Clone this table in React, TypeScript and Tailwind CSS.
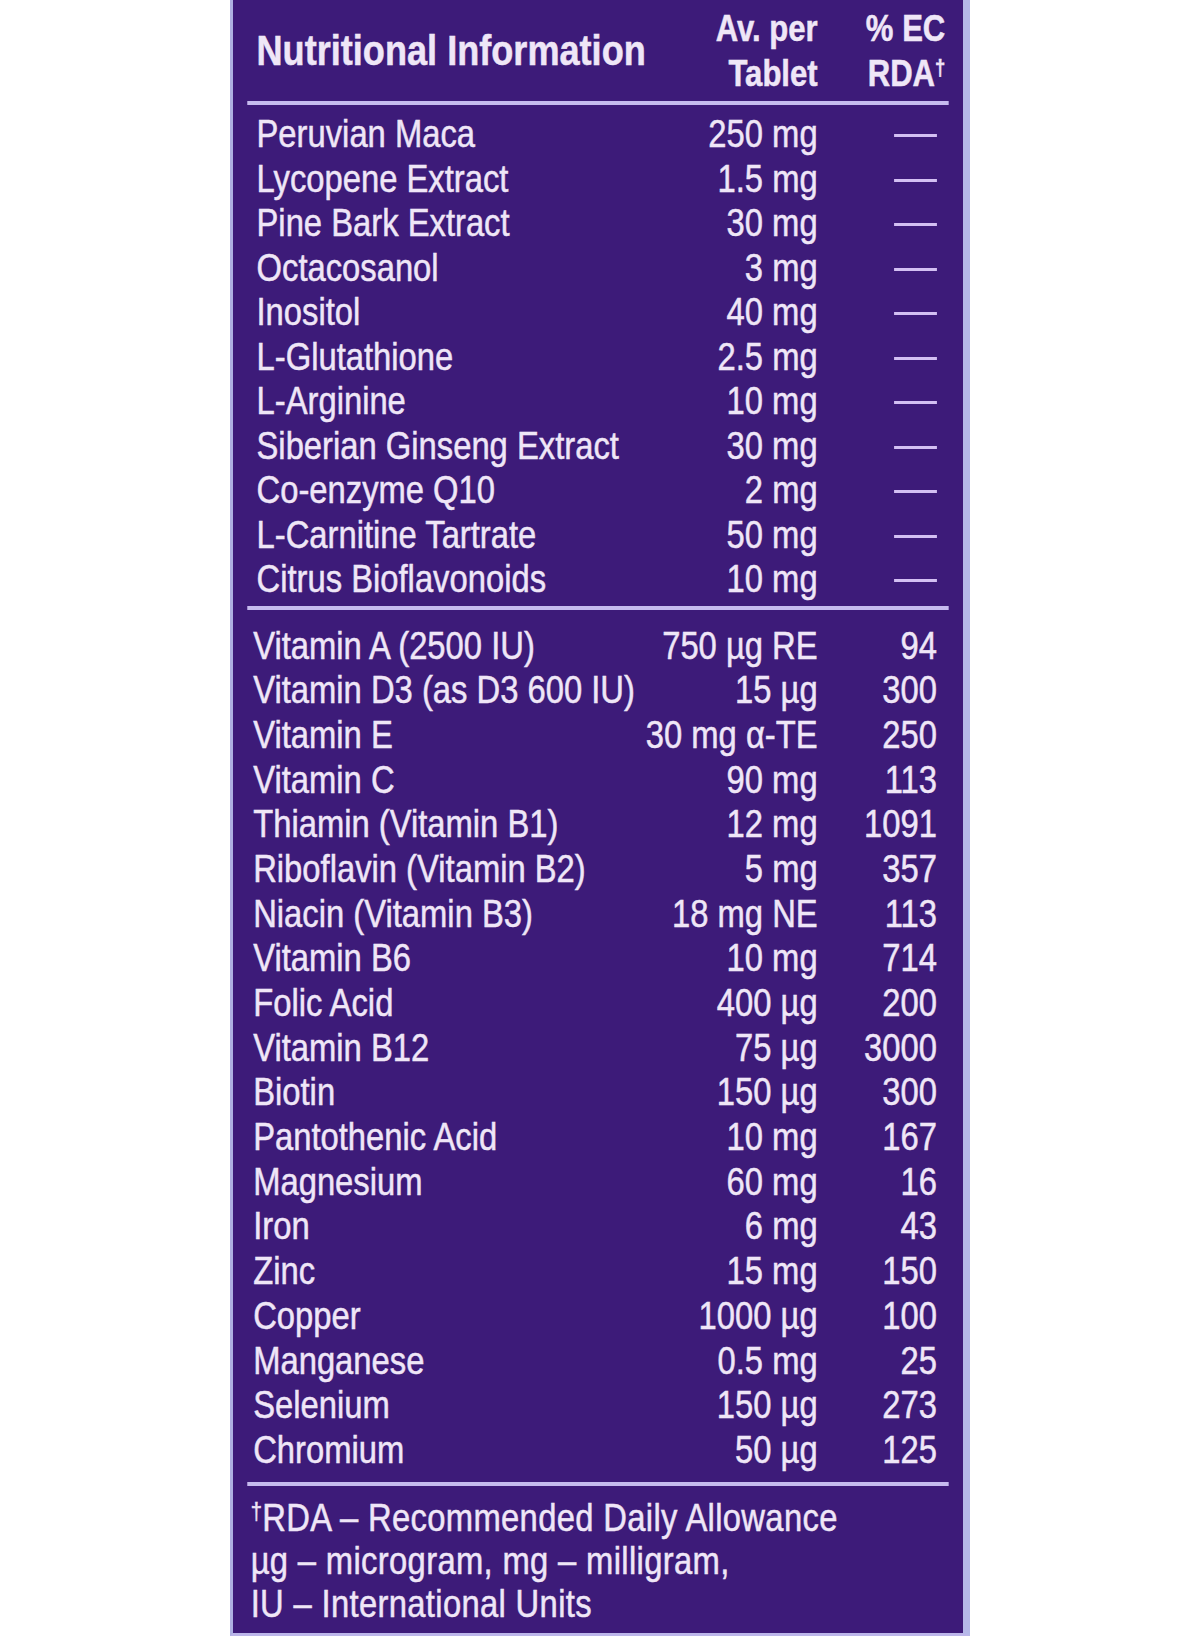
const botanicals: [string, string][] = [
  ['Peruvian Maca', '250 mg'],
  ['Lycopene Extract', '1.5 mg'],
  ['Pine Bark Extract', '30 mg'],
  ['Octacosanol', '3 mg'],
  ['Inositol', '40 mg'],
  ['L-Glutathione', '2.5 mg'],
  ['L-Arginine', '10 mg'],
  ['Siberian Ginseng Extract', '30 mg'],
  ['Co-enzyme Q10', '2 mg'],
  ['L-Carnitine Tartrate', '50 mg'],
  ['Citrus Bioflavonoids', '10 mg'],
];

const vitamins: [string, string, string][] = [
  ['Vitamin A (2500 IU)', '750 µg RE', '94'],
  ['Vitamin D3 (as D3 600 IU)', '15 µg', '300'],
  ['Vitamin E', '30 mg α-TE', '250'],
  ['Vitamin C', '90 mg', '113'],
  ['Thiamin (Vitamin B1)', '12 mg', '1091'],
  ['Riboflavin (Vitamin B2)', '5 mg', '357'],
  ['Niacin (Vitamin B3)', '18 mg NE', '113'],
  ['Vitamin B6', '10 mg', '714'],
  ['Folic Acid', '400 µg', '200'],
  ['Vitamin B12', '75 µg', '3000'],
  ['Biotin', '150 µg', '300'],
  ['Pantothenic Acid', '10 mg', '167'],
  ['Magnesium', '60 mg', '16'],
  ['Iron', '6 mg', '43'],
  ['Zinc', '15 mg', '150'],
  ['Copper', '1000 µg', '100'],
  ['Manganese', '0.5 mg', '25'],
  ['Selenium', '150 µg', '273'],
  ['Chromium', '50 µg', '125'],
];

const Rule = () => <div className="h-[4px] w-full shrink-0 bg-[#c6bbef]" />;

export default function App() {
  return (
    <div className="h-[1636px] w-[1200px] bg-white">
      <div className="ml-[230px] h-[1636px] w-[740px] overflow-hidden border-b-[3px] border-l-[3px] border-r-[7px] border-b-[#bcb6ea] border-l-[#aeb0e2] border-r-[#b5b9e8] bg-[#3d1b79] text-[#efe6f7]">
        {/* content is laid out wide, then squeezed to a condensed face */}
        <div className="flex w-[869px] origin-left scale-x-[0.84] flex-col px-[17px] font-['Liberation_Sans',Arial,sans-serif] [-webkit-text-stroke:0.5px_#efe6f7]">
          <div className="flex h-[101px] items-center pl-[11px] pr-[4px] font-bold">
            <div className="min-w-0 flex-1 whitespace-nowrap text-[43px]">Nutritional Information</div>
            <div className="w-[230px] shrink-0 text-right text-[37px] leading-[45px]">
              Av. per
              <br />
              Tablet
            </div>
            <div className="w-[152px] shrink-0 text-right text-[37px] leading-[45px]">
              % EC
              <br />
              RDA<sup className="text-[22px]">†</sup>
            </div>
          </div>
          <Rule />

          <div className="mb-[4px] mt-[7px] text-[39px]">
            {botanicals.map(([name, amount]) => (
              <div key={name} className="flex h-[44.5px] items-center pl-[11px] pr-[14px] leading-[44.5px]">
                <div className="min-w-0 flex-1 whitespace-nowrap">{name}</div>
                <div className="w-[230px] shrink-0 whitespace-nowrap text-right">{amount}</div>
                <div className="flex w-[142px] shrink-0 justify-end">
                  <div className="mt-[3px] h-[3px] w-[51px] bg-[#d3c0f3]" />
                </div>
              </div>
            ))}
          </div>
          <Rule />

          <div className="mb-[9px] mt-[14px] text-[39px]">
            {vitamins.map(([name, amount, rda]) => (
              <div key={name} className="flex h-[44.7px] items-center pl-[7px] pr-[14px] leading-[44.7px]">
                <div className="min-w-0 flex-1 whitespace-nowrap">{name}</div>
                <div className="w-[230px] shrink-0 whitespace-nowrap text-right">{amount}</div>
                <div className="w-[142px] shrink-0 text-right">{rda}</div>
              </div>
            ))}
          </div>
          <Rule />

          <div className="pl-[4px] pt-[10px] text-[39px] leading-[43px] tracking-[0.4px] whitespace-nowrap">
            <div>
              <sup className="text-[24px]">†</sup>RDA – Recommended Daily Allowance
            </div>
            <div>µg – microgram, mg – milligram,</div>
            <div>IU – International Units</div>
          </div>
        </div>
      </div>
    </div>
  );
}
